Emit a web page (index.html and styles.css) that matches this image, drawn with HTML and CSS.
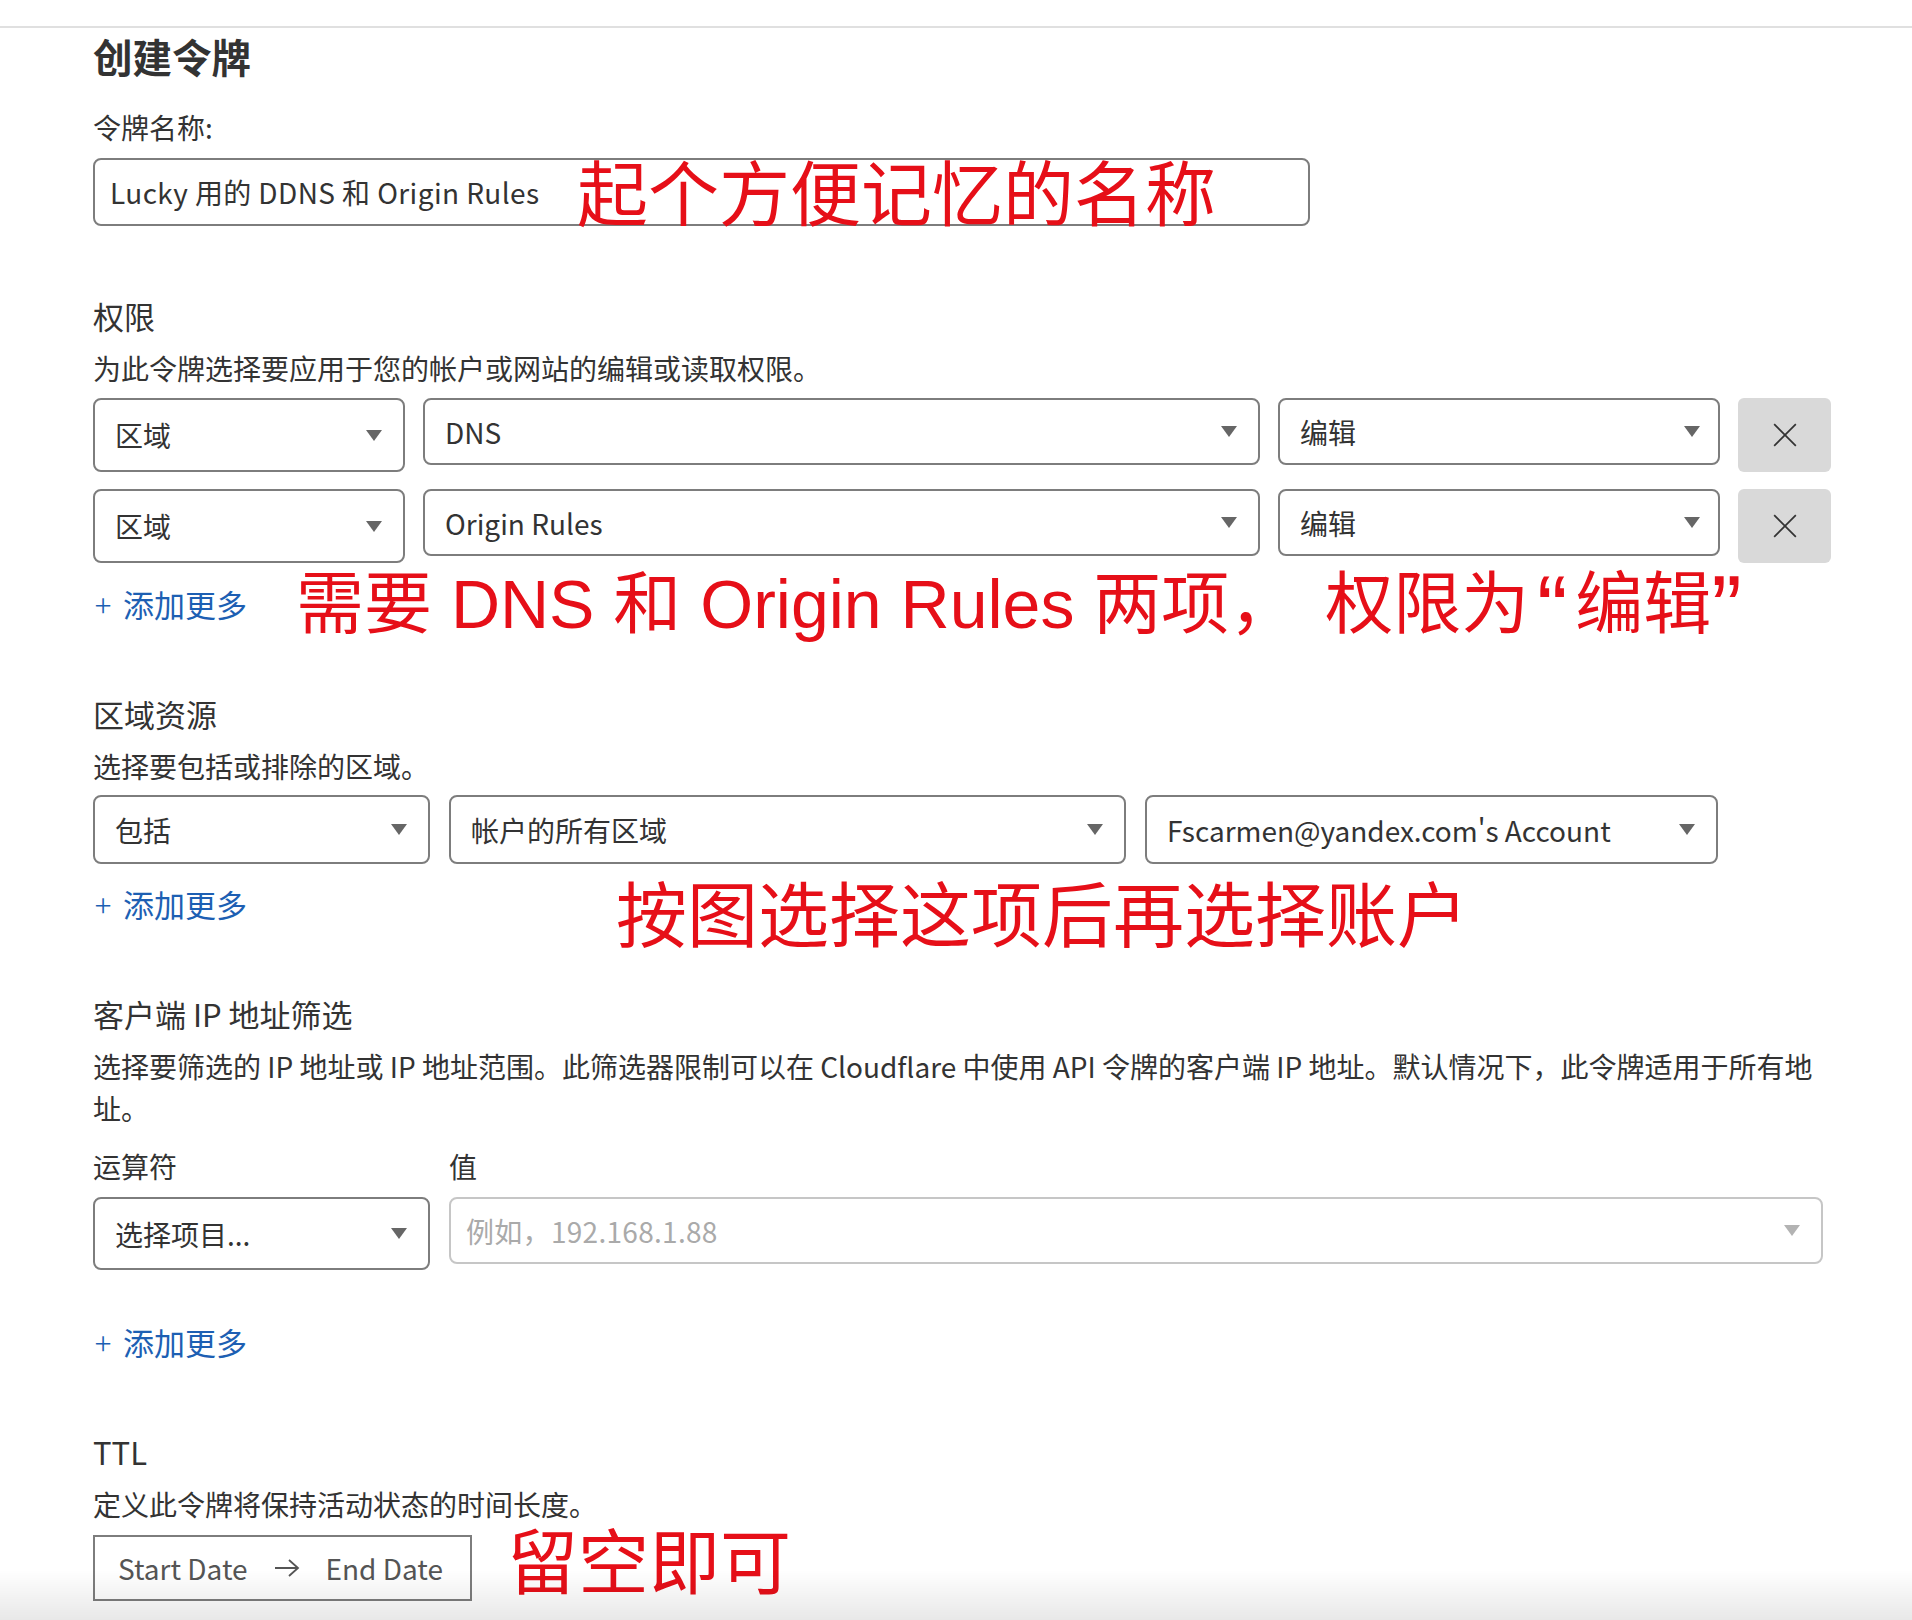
FILE: index.html
```html
<!DOCTYPE html>
<html lang="zh-CN">
<head>
<meta charset="utf-8">
<title>创建令牌</title>
<link rel="stylesheet" href="styles.css">
</head>
<body>
<div class="topbar"></div>
<main class="page">
  <h1 class="title">创建令牌</h1>

  <label class="field-label">令牌名称:</label>
  <div class="name-field">
    <div class="text-input">Lucky 用的 DDNS 和 Origin Rules</div>
    <span class="note note-name">起个方便记忆的名称</span>
  </div>

  <section class="sec">
    <h2 class="sec-title">权限</h2>
    <p class="sec-desc">为此令牌选择要应用于您的帐户或网站的编辑或读取权限。</p>
    <div class="row row-perm">
      <div class="select w-scope h-tall"><span>区域</span><i class="caret"></i></div>
      <div class="select w-perm"><span>DNS</span><i class="caret"></i></div>
      <div class="select w-level"><span>编辑</span><i class="caret"></i></div>
      <button class="remove" type="button"><svg viewBox="0 0 24 24" width="26" height="26"><path d="M2 2 L22 22 M22 2 L2 22" stroke="#333" stroke-width="1.6" fill="none"/></svg></button>
    </div>
    <div class="row row-perm row-second">
      <div class="select w-scope h-tall"><span>区域</span><i class="caret"></i></div>
      <div class="select w-perm"><span>Origin Rules</span><i class="caret"></i></div>
      <div class="select w-level"><span>编辑</span><i class="caret"></i></div>
      <button class="remove" type="button"><svg viewBox="0 0 24 24" width="26" height="26"><path d="M2 2 L22 22 M22 2 L2 22" stroke="#333" stroke-width="1.6" fill="none"/></svg></button>
    </div>
    <div class="add-line add-perm">
      <a class="add-more"><span class="plus">+</span>添加更多</a>
      <span class="note note-perm">需要 DNS 和 Origin Rules 两项，<span class="gap"></span>权限为<span class="q q-open">“</span>编辑<span class="q q-close">”</span></span>
    </div>
  </section>

  <section class="sec">
    <h2 class="sec-title">区域资源</h2>
    <p class="sec-desc">选择要包括或排除的区域。</p>
    <div class="row row-zone">
      <div class="select w-op h-zone"><span>包括</span><i class="caret"></i></div>
      <div class="select w-zone h-zone"><span>帐户的所有区域</span><i class="caret"></i></div>
      <div class="select w-acct h-zone"><span>Fscarmen@yandex.com's Account</span><i class="caret"></i></div>
    </div>
    <div class="add-line add-zone">
      <a class="add-more"><span class="plus">+</span>添加更多</a>
      <span class="note note-zone">按图选择这项后再选择账户</span>
    </div>
  </section>

  <section class="sec">
    <h2 class="sec-title">客户端 IP 地址筛选</h2>
    <p class="sec-desc sec-desc-wrap">选择要筛选的 IP 地址或 IP 地址范围。此筛选器限制可以在 Cloudflare 中使用 API 令牌的客户端 IP 地址。默认情况下，此令牌适用于所有地址。</p>
    <div class="ip-labels">
      <span class="ip-label w-op">运算符</span>
      <span class="ip-label">值</span>
    </div>
    <div class="row row-ip">
      <div class="select w-op h-op"><span>选择项目...</span><i class="caret"></i></div>
      <div class="select w-value disabled"><span class="placeholder">例如，192.168.1.88</span><i class="caret caret-light"></i></div>
    </div>
    <div class="add-line add-ip">
      <a class="add-more"><span class="plus">+</span>添加更多</a>
    </div>
  </section>

  <section class="sec">
    <h2 class="sec-title">TTL</h2>
    <p class="sec-desc">定义此令牌将保持活动状态的时间长度。</p>
    <div class="ttl-line">
      <div class="date-range">
        <span>Start Date</span>
        <svg class="arrow" viewBox="0 0 26 20" width="26" height="20"><path d="M1 10 H24 M15 2 L24 10 L15 18" stroke="#555" stroke-width="1.8" fill="none"/></svg>
        <span>End Date</span>
      </div>
      <span class="note note-ttl">留空即可</span>
    </div>
  </section>
</main>
<div class="fade"></div>
</body>
</html>
```

FILE: styles.css
```css
html, body {
  margin: 0;
  padding: 0;
  background: #ffffff;
}

body {
  font-family: "Noto Sans CJK SC", "Noto Sans", sans-serif;
  color: #333333;
}

.topbar {
  height: 26px;
  border-bottom: 2px solid #e0e0e0;
}

.page {
  padding-left: 93px;
  width: 1740px;
}

.title {
  margin: 5px 0 0;
  font-size: 39.5px;
  line-height: 46px;
  font-weight: 700;
  color: #333333;
}

.field-label {
  display: block;
  margin-top: 28px;
  font-size: 28px;
  line-height: 40px;
}

.name-field {
  position: relative;
  margin-top: 11px;
  width: 1217px;
}

.text-input {
  box-sizing: border-box;
  height: 68px;
  border: 2px solid #7d7d7d;
  border-radius: 8px;
  padding: 0 15px;
  display: flex;
  align-items: center;
  font-size: 28px;
  letter-spacing: 0.4px;
  color: #333333;
}

.note {
  position: absolute;
  color: #e60f18;
  font-family: "Liberation Sans", "Noto Sans CJK SC", sans-serif;
  line-height: 1;
  white-space: nowrap;
  transform: translateY(-50%);
}

.note .gap {
  display: inline-block;
  width: 28px;
}

.note .q {
  display: inline-block;
  font-family: "Liberation Sans", sans-serif;
  font-size: 1.35em;
  line-height: 0.74;
  vertical-align: -12px;
}

.note .q-open {
  width: 46px;
  text-align: center;
}

.note .q-close {
  width: 34px;
  text-align: left;
}

.note-name {
  left: 484px;
  top: calc(50% + 3px);
  font-size: 71px;
}

.sec-title {
  margin: 70px 0 0;
  font-size: 31px;
  line-height: 40px;
  font-weight: 400;
  color: #333333;
}

.sec-desc {
  margin: 12px 0 0;
  font-size: 28px;
  line-height: 40px;
}

.sec-desc-wrap {
  margin-top: 11px;
  line-height: 42px;
}

.row {
  display: flex;
  align-items: flex-start;
  margin-top: 10px;
  column-gap: 18px;
}

.row-second {
  margin-top: 17px;
}

.row-zone {
  margin-top: 9px;
  column-gap: 19px;
}

.row-ip {
  margin-top: 11px;
  column-gap: 19px;
}

.select {
  box-sizing: border-box;
  height: 67px;
  border: 2px solid #7d7d7d;
  border-radius: 8px;
  padding: 0 21px 0 20px;
  display: flex;
  align-items: center;
  justify-content: space-between;
  font-size: 28px;
  color: #333333;
  background: #ffffff;
}

.caret {
  width: 0;
  height: 0;
  border-left: 8px solid transparent;
  border-right: 8px solid transparent;
  border-top: 11px solid #666666;
  flex: none;
}

.caret-light {
  border-top-color: #b3b3b3;
}

.h-tall { height: 74px; }
.h-zone { height: 69px; }
.h-op { height: 73px; }

.w-scope { width: 312px; }
.w-perm { width: 837px; }
.w-level { width: 442px; padding-right: 18px; }
.w-op { width: 337px; flex: none; }
.w-zone { width: 677px; }
.w-acct { width: 573px; }
.w-value { width: 1374px; padding-left: 15px; }

.select.disabled {
  border-color: #c6c6c6;
}

.placeholder {
  color: #aaaaaa;
  letter-spacing: 0.3px;
}

.remove {
  width: 93px;
  height: 74px;
  border: none;
  border-radius: 6px;
  background: #d9d9d9;
  display: flex;
  align-items: center;
  justify-content: center;
  padding: 0;
}

.add-line {
  position: relative;
  height: 40px;
}

.add-perm { margin-top: 21px; }
.add-zone { margin-top: 20px; }
.add-ip { margin-top: 52px; }

.add-more {
  font-size: 31px;
  line-height: 40px;
  color: #1d5fb3;
  white-space: nowrap;
}

.add-more .plus {
  display: inline-block;
  width: 20px;
  margin-right: 10px;
  font-weight: 300;
  text-align: center;
}

.note-perm {
  left: 203px;
  top: calc(50% + 2px);
  font-size: 68px;
}

.note-zone {
  left: 523px;
  top: calc(50% + 12px);
  font-size: 71px;
}

.ip-labels {
  display: flex;
  column-gap: 19px;
  margin-top: 17px;
  font-size: 28px;
  line-height: 40px;
}

.ttl-line {
  position: relative;
  margin-top: 11px;
}

.date-range {
  box-sizing: border-box;
  width: 379px;
  height: 66px;
  border: 2px solid #7d7d7d;
  display: flex;
  align-items: center;
  padding-left: 23px;
  font-size: 28px;
  color: #555555;
}

.arrow {
  margin: 0 26px 0 26px;
}

.note-ttl {
  left: 414px;
  top: calc(50% - 5px);
  font-size: 71px;
}

.fade {
  position: fixed;
  left: 0;
  right: 0;
  bottom: 0;
  height: 50px;
  background: linear-gradient(rgba(0, 0, 0, 0), rgba(0, 0, 0, 0.09));
  pointer-events: none;
}
```
